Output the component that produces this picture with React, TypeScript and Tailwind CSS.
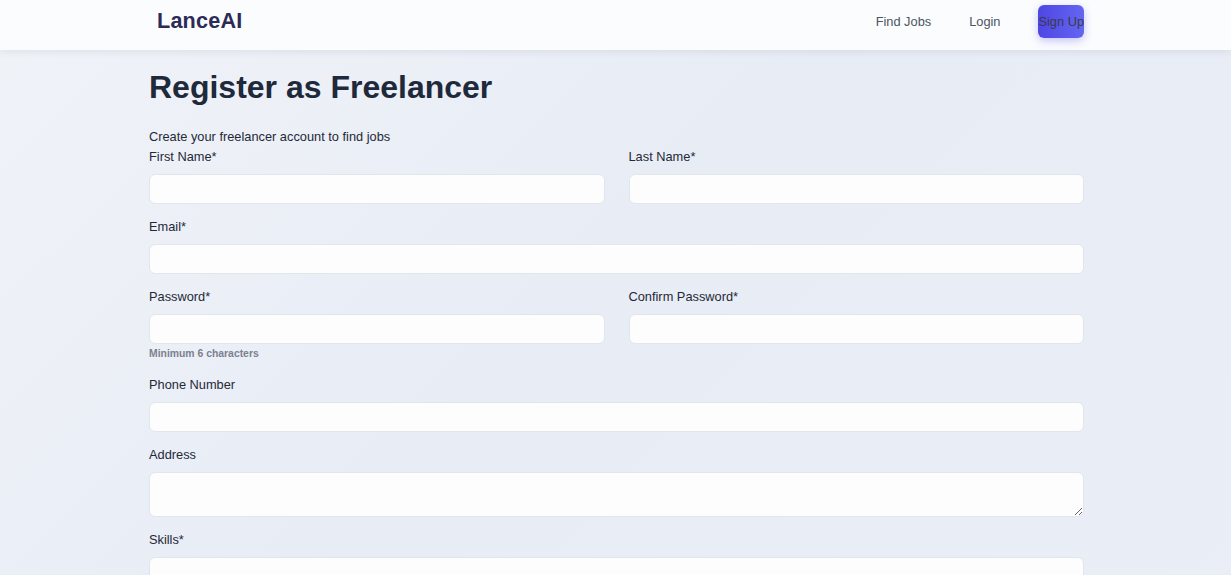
import React from "react";

const font = { fontFamily: '"Liberation Sans", Arial, sans-serif' };

function Field({ label, hint, textarea }: { label: string; hint?: string; textarea?: boolean }) {
  return (
    <div className="flex flex-col">
      <label className="pt-[1px] text-[12.8px] leading-5 text-[#1f2937] mb-[7px]">{label}</label>
      {textarea ? (
        <textarea className="h-[45px] w-full rounded-md border border-[#e1e5ec] bg-[#fdfdfe] px-3 py-1.5 text-[12.8px] outline-none" />
      ) : (
        <input className="h-[30px] w-full rounded-md border border-[#e1e5ec] bg-[#fdfdfe] px-3 text-[12.8px] outline-none" />
      )}
      {hint && (
        <span className="mt-[2px] text-[10.4px] leading-4 font-bold text-[#7b8190]">{hint}</span>
      )}
    </div>
  );
}

export default function App() {
  return (
    <div
      className="min-h-screen bg-[linear-gradient(135deg,#f0f3f8_0%,#e8ecf5_45%,#eaeef7_100%)]"
      style={font}
    >
      <nav className="h-[50px] bg-[#fbfcfe] shadow-[0_2px_8px_rgba(30,41,80,0.08)]">
        <div className="mx-auto flex h-[43px] w-[937px] pl-[2px] items-center justify-between">
          <div className="ml-2 text-[21.6px] font-extrabold text-[#2c2b55] tracking-[0.2px]">LanceAI</div>
          <div className="flex items-center gap-[38px] text-[12.8px]">
            <a className="text-[#4b5563]">Find Jobs</a>
            <a className="text-[#4b5563]">Login</a>
            <button className="h-[33px] rounded-md bg-[linear-gradient(90deg,#4f46e5,#6366f1)] text-[12.8px] text-[#3a3a4a] shadow-[0_3px_8px_rgba(79,70,229,0.3)]" style={font}>
              Sign Up
            </button>
          </div>
        </div>
      </nav>
      <main className="mx-auto w-[937px] pl-[2px] pt-[17px] pb-10">
        <h1 className="text-[32px] leading-10 font-bold text-[#1e293b]">Register as Freelancer</h1>
        <p className="mt-[20px] text-[12.8px] leading-5 text-[#1f2937]">Create your freelancer account to find jobs</p>
        <form className="flex flex-col gap-3 -mt-[1px]">
          <div className="grid grid-cols-2 gap-6">
            <Field label="First Name*" />
            <Field label="Last Name*" />
          </div>
          <Field label="Email*" />
          <div className="grid grid-cols-2 gap-6">
            <Field label="Password*" hint="Minimum 6 characters" />
            <Field label="Confirm Password*" />
          </div>
          <Field label="Phone Number" />
          <Field label="Address" textarea />
          <Field label="Skills*" />
          <Field label="Experience (years)" />
        </form>
      </main>
    </div>
  );
}
